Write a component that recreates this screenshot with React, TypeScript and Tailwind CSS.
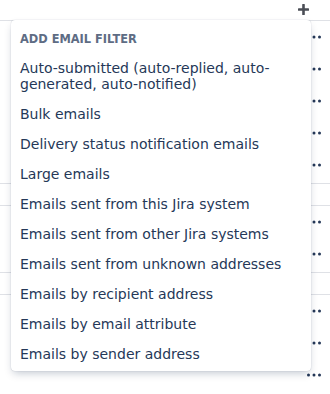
import React from 'react';

const filters = [
  'Auto-submitted (auto-replied, auto-generated, auto-notified)',
  'Bulk emails',
  'Delivery status notification emails',
  'Large emails',
  'Emails sent from this Jira system',
  'Emails sent from other Jira systems',
  'Emails sent from unknown addresses',
  'Emails by recipient address',
  'Emails by email attribute',
  'Emails by sender address',
];

const MoreIcon = () => (
  <svg width="16" height="8" viewBox="0 0 16 8" fill="#253858">
    <circle cx="2.5" cy="4" r="1.5" />
    <circle cx="8" cy="4" r="1.5" />
    <circle cx="13.5" cy="4" r="1.5" />
  </svg>
);

const Row = () => (
  <div className="h-8 flex items-center justify-end pr-[8px]">
    <MoreIcon />
  </div>
);

const Group = ({ rows }: { rows: number }) => (
  <div className="border-b border-[#dfe1e6] pb-[2px]">
    {Array.from({ length: rows }).map((_, i) => (
      <Row key={i} />
    ))}
  </div>
);

export default function App() {
  return (
    <div className="relative w-[330px] h-[394px] overflow-hidden bg-white font-['DejaVu_Sans',sans-serif]">
      <div className="h-[21px] border-b border-[#dfe1e6] flex items-start justify-end pr-[21px] pt-[4px]">
        <svg width="11" height="11" viewBox="0 0 11 11" fill="#4a4d55">
          <rect x="4.2" y="0" width="2.6" height="11" rx="0.6" />
          <rect x="0" y="4.2" width="11" height="2.6" rx="0.6" />
        </svg>
      </div>
      <Group rows={5} />
      <div className="h-[22px] border-b border-[#dfe1e6]" />
      <Group rows={2} />
      <div className="h-[22px] border-b border-[#dfe1e6]" />
      <Row />
      <Row />
      <Row />

      <div className="absolute left-[11px] top-[20px] w-[300px] bg-white rounded-[4px] shadow-[0_4px_8px_-2px_rgba(9,30,66,0.25),0_0_1px_rgba(9,30,66,0.31)] pt-[11px] pb-[2px]">
        <div className="px-[9px] text-[11.4px] leading-[16px] font-bold uppercase text-[#5e6c84]">
          Add email filter
        </div>
        <div className="mt-[6px]">
          {filters.map((f) => (
            <div key={f} className="px-[9px] py-[7px] text-[14px] leading-[16px] text-[#253858]">
              {f}
            </div>
          ))}
        </div>
      </div>
    </div>
  );
}
